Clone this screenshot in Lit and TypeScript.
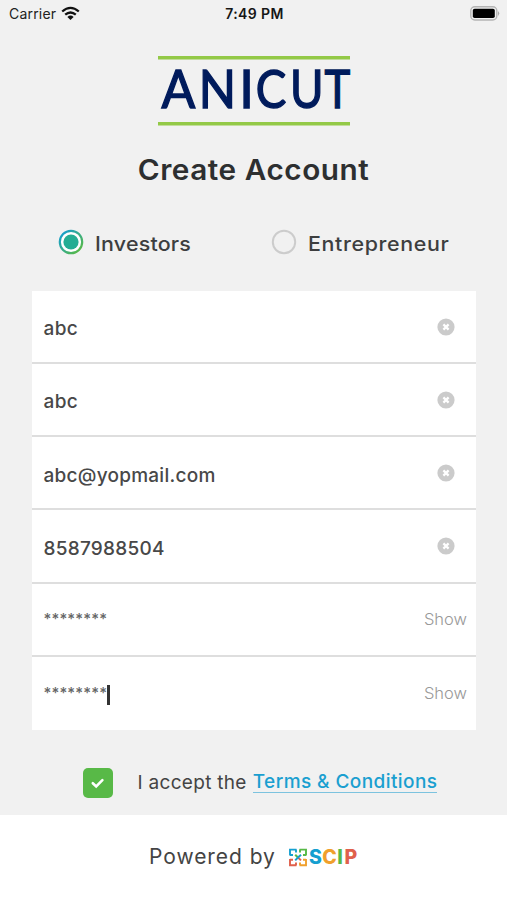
import { LitElement, html, css, svg } from "lit";
import { customElement, property } from "lit/decorators.js";

@customElement("status-bar")
class StatusBar extends LitElement {
  static styles = css`
    :host { display: grid; grid-template-columns: 1fr auto 1fr; align-items: center; height: 27px; padding: 0 7px 0 9px; box-sizing: border-box; font: 400 14px/27px Inter, sans-serif; color: #222; }
    .left { display: flex; align-items: center; gap: 5px; }
    .carrier { letter-spacing: 0.2px; }
    .time { font-weight: 600; font-size: 14px; color: #161616; letter-spacing: 0.4px; }
    .right { display: flex; justify-content: flex-end; }
    svg { display: block; margin-bottom: 1px; }
  `;
  render() {
    return html`
      <div class="left"><span class="carrier">Carrier</span>
        <svg width="19" height="15" viewBox="0 0 19 15" fill="none" stroke="#111" stroke-width="2.3">
          <path d="M1.2 5.5Q9.5-1.7 17.8 5.5M4.2 8.7Q9.5 4.2 14.8 8.7" />
          <path d="M6.4 10.9Q9.5 8.2 12.6 10.9L9.5 14Z" fill="#111" stroke="none" />
        </svg>
      </div>
      <span class="time">7:49 PM</span>
      <div class="right">
        <svg width="30" height="15" viewBox="0 0 30 15">
          <rect x=".8" y=".8" width="26" height="13.2" rx="4" fill="#f1f1f1" stroke="#b4b4b4" stroke-width="1.4" />
          <rect x="2.8" y="2.8" width="22" height="9.2" rx="1.8" fill="#000" />
          <path d="M28 4.9q2.4 2.4 0 5z" fill="#aaa" />
        </svg>
      </div>`;
  }
}

const WORDMARK: [string, number, number][] = [
  ["A", 20.5, 0.95],
  ["N", 59.5, 0.93],
  ["I", 88.5, 1],
  ["C", 113, 0.87],
  ["U", 148.7, 0.87],
  ["T", 179.4, 0.83],
];

@customElement("anicut-logo")
class AnicutLogo extends LitElement {
  static styles = css`
    :host { display: block; width: 192px; height: 70px; }
    svg { display: block; overflow: visible; }
    .word { font: 400 52.5px Lato, sans-serif; fill: #001b5c; stroke: #001b5c; stroke-width: 1.4px; text-anchor: middle; }
  `;
  render() {
    return html`<svg width="192" height="70" viewBox="0 0 192 70">
      <path d="M0 1.8H192M0 67.8H192" stroke="#93c947" stroke-width="3.6" />
      ${WORDMARK.map(([letter, x, scale]) => svg`<text class="word" transform="translate(${x} 52.2) scale(${scale} 1)">${letter}</text>`)}
    </svg>`;
  }
}

@customElement("radio-option")
class RadioOption extends LitElement {
  @property() label = "";
  @property({ type: Boolean }) checked = false;
  static styles = css`
    :host { display: flex; align-items: center; gap: 11px; font: 500 20px/26px Inter, sans-serif; color: #3d3e3f; letter-spacing: 0.2px; }
    :host(.long) { letter-spacing: 0.6px; }
    svg { display: block; flex: none; margin-bottom: 2px; }
    .label { padding-top: 3px; white-space: nowrap; transform: scaleX(1.07); transform-origin: left; }
  `;
  render() {
    return html`<svg width="26" height="26" viewBox="0 0 26 26">
        <defs><linearGradient id="ring" x1="0" y1="0" x2="1" y2="1"><stop offset=".1" stop-color="#179fcb" /><stop offset=".9" stop-color="#58b947" /></linearGradient></defs>
        ${this.checked
          ? svg`<circle cx="13" cy="13" r="11.2" fill="#fff" stroke="url(#ring)" stroke-width="2.2"/><circle cx="13" cy="13" r="7.6" fill="#24ad94"/>`
          : svg`<circle cx="13" cy="13" r="11.2" fill="none" stroke="#ccc" stroke-width="2"/>`}
      </svg><span class="label">${this.label}</span>`;
  }
}

@customElement("form-field")
class FormField extends LitElement {
  @property() value = "";
  @property() kind = "text";
  @property({ type: Boolean }) focused = false;
  static styles = css`
    :host { display: flex; align-items: center; justify-content: space-between; box-sizing: border-box; padding: 5px 9px 0 12px; font: 500 19px/26px Inter, sans-serif; color: #484848; }
    .value { display: flex; align-items: center; white-space: nowrap; }
    .text { letter-spacing: 0.4px; }
    .email, .phone { letter-spacing: 0.25px; padding-top: 1px; }
    .password { font: 500 15px/26px Inter, sans-serif; color: #666; letter-spacing: 0.15px; padding-bottom: 6px; }
    .caret { width: 2.5px; height: 20px; margin-top: 5px; background: #333; }
    .show { font: 300 16.5px/22px Inter, sans-serif; color: #999; padding-bottom: 6px; }
    svg { display: block; margin: 0 12.5px 4px 0; }
  `;
  render() {
    return html`<div class="value ${this.kind}"><span>${this.value}</span>${this.focused ? html`<span class="caret"></span>` : ""}</div>
      ${this.kind === "password"
        ? html`<span class="show">Show</span>`
        : html`<svg width="18" height="18" viewBox="0 0 18 18"><circle cx="9" cy="9" r="8.6" fill="#cbcbcb" /><path d="M6.4 6.4l5.2 5.2M11.6 6.4l-5.2 5.2" stroke="#fff" stroke-width="2.2" /></svg>`}`;
  }
}

@customElement("scip-logo")
class ScipLogo extends LitElement {
  static styles = css`
    :host { display: block; }
    svg { display: block; overflow: visible; }
    .word { font: 800 19.5px Inter, sans-serif; }
    .blue { fill: #159fd0; } .orange { fill: #f0a02c; } .green { fill: #57b947; } .red { fill: #e0604c; }
  `;
  render() {
    return html`<svg width="72" height="26" viewBox="0 -3 72 26">
      <g fill="none" stroke-width="1.9">
        <path d="M1 7.5V1.6H7.5M1 7H4M7 1.6V4.5" stroke="#159fd0" />
        <path d="M10.5 1.6H17V7.5M11 1.6V4.5M17 7H14" stroke="#57b947" />
        <path d="M1 11V17.3H7.5M1 11.7H4M7 17.3V14.4" stroke="#e0604c" />
        <path d="M17 11V17.3H10.5M17 11.7H14M11 17.3V14.4" stroke="#f0a02c" />
        <path d="M6.2 6.7L9 9.5" stroke="#57b947" stroke-width="2" /><path d="M9 9.5L12 12.4" stroke="#e0604c" stroke-width="2" />
        <path d="M12 6.7L9 9.5" stroke="#159fd0" stroke-width="2" /><path d="M9 9.5L6.2 12.4" stroke="#159fd0" stroke-width="2" />
      </g>
      <text class="word" x="20 33.3 48.3 55.5" y="16.3"><tspan class="blue">S</tspan><tspan class="orange">C</tspan><tspan class="green">I</tspan><tspan class="red">P</tspan></text>
    </svg>`;
  }
}

@customElement("app-root")
class AppRoot extends LitElement {
  static styles = css`
    :host { display: flex; flex-direction: column; width: 507px; height: 900px; overflow: hidden; background: #f1f1f1; font-family: Inter, sans-serif; }
    anicut-logo { margin: 29px 0 0 158px; }
    h1 { margin: 27px 0 0; height: 34px; text-align: center; font: 600 28px/34px Inter, sans-serif; letter-spacing: 0.5px; color: #2d2f30; transform: scaleX(1.062); }
    .roles { display: grid; grid-template-columns: 213px 1fr; margin: 41px 0 0 57.5px; height: 29px; }
    .fields { display: grid; grid-template-rows: repeat(6, 1fr); margin: 33.5px 31px 0 31.5px; height: 439.5px; background: #fff; }
    form-field:not(:last-child) { border-bottom: 2px solid #dedede; }
    .accept { display: flex; align-items: center; height: 30px; margin: 37.5px 0 0 82.5px; font: 400 19px/26px Inter, sans-serif; letter-spacing: 0.3px; color: #444; }
    .box { display: block; margin-right: 25px; }
    .terms { color: #1a9fd0; font-weight: 500; border-bottom: 1px solid #7cc3df; line-height: 20px; margin-left: 6px; letter-spacing: 0.42px; }
    footer { flex: 1; display: flex; background: #fff; margin-top: 17px; padding: 29.5px 0 0 149px; gap: 13px; align-items: flex-start; font: 400 21px/26px Inter, sans-serif; letter-spacing: 0.95px; color: #444; }
    scip-logo { margin-top: 1px; }
  `;
  render() {
    return html`<status-bar></status-bar>
      <anicut-logo></anicut-logo>
      <h1><span>Create Account</span></h1>
      <div class="roles">
        <radio-option label="Investors" checked></radio-option>
        <radio-option class="long" label="Entrepreneur"></radio-option>
      </div>
      <div class="fields">
        <form-field value="abc"></form-field>
        <form-field value="abc"></form-field>
        <form-field kind="email" value="abc@yopmail.com"></form-field>
        <form-field kind="phone" value="8587988504"></form-field>
        <form-field kind="password" value="********"></form-field>
        <form-field kind="password" value="********" focused></form-field>
      </div>
      <div class="accept">
        <svg class="box" width="30" height="30" viewBox="0 0 30 30"><rect width="30" height="30" rx="5" fill="#58b947" /><path d="M9.8 15.2l3.4 3.2 6.2-6.2" fill="none" stroke="#fff" stroke-width="2.6" stroke-linecap="round" /></svg>
        <span class="accept-text">I accept the</span><span class="terms">Terms &amp; Conditions</span>
      </div>
      <footer><span class="powered">Powered by</span><scip-logo></scip-logo></footer>`;
  }
}
